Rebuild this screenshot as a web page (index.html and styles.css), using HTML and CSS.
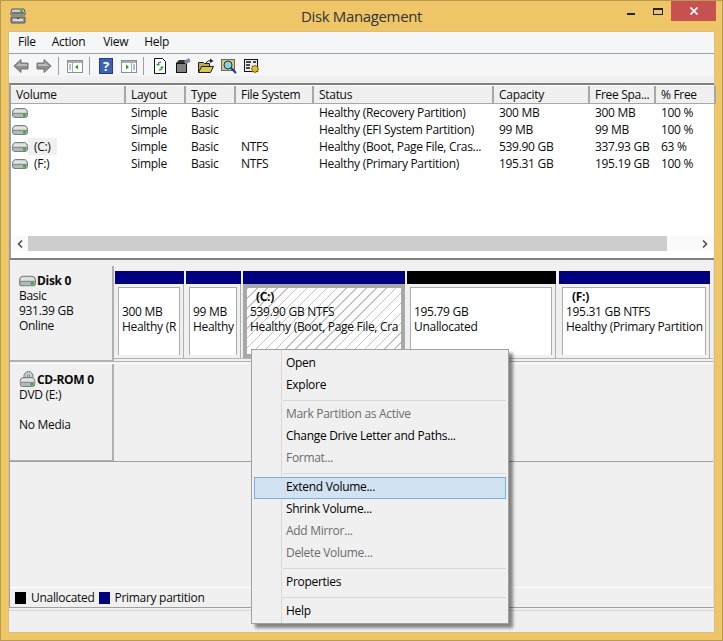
FILE: index.html
```html
<!DOCTYPE html>
<html lang="en">
<head>
<meta charset="utf-8">
<title>Disk Management</title>
<link rel="stylesheet" href="styles.css">
</head>
<body>
<svg class="defs" width="0" height="0" aria-hidden="true">
  <symbol id="drive" viewBox="0 0 16 10">
    <path d="M3.500.5h9c1.500 0 3 2 3 4v2.500a2.500 2.500 0 0 1-2.500 2.500H3A2.500 2.500 0 0 1 .5 7V4.500c0-2 1.500-4 3-4z" fill="#b4b8b8" stroke="#7b7f7f"/>
    <path d="M3.500 1.500h9c1 0 2 1.500 2.300 3H1.200c.3-1.500 1.300-3 2.300-3z" fill="#e2e4e4"/>
    <rect x="1" y="5" width="14" height="1" fill="#8a8e8e"/>
    <rect x="11" y="6" width="3" height="2.500" fill="#35b030"/>
  </symbol>
</svg>
<div class="window">
  <header class="titlebar">
    <svg class="app-icon" viewBox="0 0 16 16" width="16" height="16">
      <path d="M2 1h12l1 3v3H1V4z" fill="#c9cdcf" stroke="#50565a"/>
      <rect x="2" y="4" width="12" height="2" fill="#6f777c"/>
      <rect x="10" y="2" width="3" height="2" fill="#3cc03c"/>
      <path d="M1 9h14v5a1 1 0 0 1-1 1H2a1 1 0 0 1-1-1z" fill="#8f979b" stroke="#50565a"/>
      <rect x="3" y="11" width="10" height="2" fill="#d5d9db"/>
      <rect x="7" y="10" width="2" height="1" fill="#333"/>
    </svg>
    <div class="title">Disk Management</div>
    <div class="controls">
      <span class="btn-min"></span>
      <span class="btn-max"></span>
      <span class="btn-close">
        <svg viewBox="0 0 8 8" width="8" height="8"><path d="M.5.5l7 7M7.500.5l-7 7" stroke="#fff" stroke-width="1.600"/></svg>
      </span>
    </div>
  </header>

  <main class="client">
    <nav class="menubar">
      <span class="m-file">File</span><span class="m-action">Action</span><span class="m-view">View</span><span class="m-help">Help</span>
    </nav>
    <div class="toolbar">
      <svg class="tool" viewBox="0 0 16 16"><path d="M8 1.500L.8 8 8 14.500V11h7V5H8z" fill="#8e8e8e" stroke="#777"/><path d="M7 4.500L3 8h11V6H7z" fill="#bdbdbd"/></svg>
      <svg class="tool" viewBox="0 0 16 16"><path d="M8 1.500L15.200 8 8 14.500V11H1V5h7z" fill="#8e8e8e" stroke="#777"/><path d="M9 4.500L13 8H2V6h7z" fill="#bdbdbd"/></svg>
      <span class="tool-sep"></span>
      <svg class="tool" viewBox="0 0 16 16"><rect x=".5" y="2.500" width="15" height="12" fill="#fff" stroke="#8a8f93"/><rect x="1" y="3" width="14" height="2" fill="#a9adb0"/><path d="M5.500 5v9" stroke="#a7abae"/><path d="M2 7h2M2 9h2M2 11h2" stroke="#5b87b5"/><path d="M11 6.500v5L8 9z" fill="#23a623"/></svg>
      <span class="tool-sep"></span>
      <svg class="tool" viewBox="0 0 16 16"><rect x="1.500" y=".5" width="13" height="15" fill="#3d60b5" stroke="#233d88"/><text x="8" y="13" class="help-q">?</text></svg>
      <svg class="tool" viewBox="0 0 16 16"><rect x=".5" y="2.500" width="15" height="12" fill="#fff" stroke="#8a8f93"/><rect x="1" y="3" width="14" height="2" fill="#a9adb0"/><path d="M10.500 5v9" stroke="#a7abae"/><path d="M12 7h2M12 9h2M12 11h2" stroke="#5b87b5"/><path d="M5 6.500v5L8 9z" fill="#23a623"/></svg>
      <span class="tool-sep"></span>
      <svg class="tool" viewBox="0 0 16 16"><path d="M2.500.5h8l3 3v12h-11z" fill="#fff" stroke="#111"/><path d="M9 3.500a3 3 0 0 0-3.500 2.500H4l2 2 2-2H7a1.500 1.500 0 0 1 2-1z" fill="#1e9b2a"/><path d="M7 12.500a3 3 0 0 0 3.500-2.500H12l-2-2-2 2h1a1.500 1.500 0 0 1-2 1z" fill="#1e9b2a"/></svg>
      <svg class="tool" viewBox="0 0 16 16"><path d="M1 5h11v10H1z" fill="#111"/><path d="M1 5l3-3h7v3z" fill="#333"/><path d="M2 7h9M2 9h9M2 11h9M2 13h9" stroke="#f2f2f2"/><path d="M9 3l5-3 1.500 3.500-5 3z" fill="#76899e"/></svg>
      <svg class="tool" viewBox="0 0 16 16"><path d="M.5 14.500v-10h5l1 1h5v3" fill="#bfae3e" stroke="#222"/><path d="M.5 14.500l3-6h12l-3 6z" fill="#d6c654" stroke="#222"/><path d="M8 5a4 4 0 0 1 5-2" fill="none" stroke="#222"/><path d="M12 .5l3.500 2.500-3.500 2z" fill="#222"/></svg>
      <svg class="tool" viewBox="0 0 16 16"><rect x=".5" y="1.500" width="13" height="11" fill="#d6c482" stroke="#6b6a5a"/><circle cx="7" cy="7" r="4" fill="#7fd3ea" stroke="#333"/><path d="M10 10l5 5" stroke="#1c2fb0" stroke-width="2"/></svg>
      <svg class="tool" viewBox="0 0 16 16"><rect x=".5" y="1.500" width="13" height="12" fill="#eee" stroke="#111"/><path d="M2 4h5M9 4h3M2 7h4M2 10h4" stroke="#111" stroke-width="1.500"/><path d="M11 7l1 1.500 2-.5-.5 2 1.500 1-1.500 1 .5 2-2-.5-1 1.500-1-1.500-2 .5.5-2-1.500-1 1.500-1-.5-2 2 .5z" fill="#e6c21e" stroke="#5d4c08" stroke-width=".7"/></svg>
    </div>

    <section class="volumes">
      <div class="vgrid vhead">
        <span>Volume</span><span>Layout</span><span>Type</span><span>File System</span><span>Status</span><span>Capacity</span><span>Free Spa...</span><span>% Free</span>
      </div>
      <div class="vbody">
        <div class="vgrid vrow">
          <span class="vname"><svg class="drive-sm"><use href="#drive"/></svg></span><span>Simple</span><span>Basic</span><span></span><span>Healthy (Recovery Partition)</span><span>300 MB</span><span>300 MB</span><span>100 %</span>
        </div>
        <div class="vgrid vrow">
          <span class="vname"><svg class="drive-sm"><use href="#drive"/></svg></span><span>Simple</span><span>Basic</span><span></span><span>Healthy (EFI System Partition)</span><span>99 MB</span><span>99 MB</span><span>100 %</span>
        </div>
        <div class="vgrid vrow">
          <span class="vname"><svg class="drive-sm"><use href="#drive"/></svg><em class="sel">(C:)</em></span><span>Simple</span><span>Basic</span><span>NTFS</span><span>Healthy (Boot, Page File, Cras...</span><span>539.90 GB</span><span>337.93 GB</span><span>63 %</span>
        </div>
        <div class="vgrid vrow">
          <span class="vname"><svg class="drive-sm"><use href="#drive"/></svg><em>(F:)</em></span><span>Simple</span><span>Basic</span><span>NTFS</span><span>Healthy (Primary Partition)</span><span>195.31 GB</span><span>195.19 GB</span><span>100 %</span>
        </div>
      </div>
      <div class="hscroll">
        <span class="arrow">
          <svg viewBox="0 0 6 8" width="6" height="8"><path d="M5 .5L1.500 4 5 7.500" fill="none" stroke="#505050" stroke-width="1.600"/></svg>
        </span>
        <span class="thumb"></span>
        <span class="arrow arrow-r">
          <svg viewBox="0 0 6 8" width="6" height="8"><path d="M1 .5L4.500 4 1 7.500" fill="none" stroke="#505050" stroke-width="1.600"/></svg>
        </span>
      </div>
    </section>

    <section class="disks">
      <div class="disk disk-0">
        <div class="dlabel">
          <div class="dname"><svg class="drive-lg"><use href="#drive"/></svg>Disk 0</div>
          <div>Basic</div>
          <div>931.39 GB</div>
          <div>Online</div>
        </div>
        <div class="parts">
          <div class="part p1">
            <div class="bar"></div>
            <div class="pbody"><div class="pin"><p class="blank">&nbsp;</p><p>300 MB</p><p>Healthy (R</p></div></div>
          </div>
          <div class="part p2">
            <div class="bar"></div>
            <div class="pbody"><div class="pin"><p class="blank">&nbsp;</p><p>99 MB</p><p>Healthy</p></div></div>
          </div>
          <div class="part p3">
            <div class="bar"></div>
            <div class="pbody pbody-sel"><div class="pin hatch"><p class="pdrive">(C:)</p><p>539.90 GB NTFS</p><p>Healthy (Boot, Page File, Cra</p></div></div>
          </div>
          <div class="part p4">
            <div class="bar black"></div>
            <div class="pbody"><div class="pin"><p class="blank">&nbsp;</p><p>195.79 GB</p><p>Unallocated</p></div></div>
          </div>
          <div class="part p5">
            <div class="bar"></div>
            <div class="pbody"><div class="pin"><p class="pdrive">(F:)</p><p>195.31 GB NTFS</p><p>Healthy (Primary Partition</p></div></div>
          </div>
        </div>
      </div>
      <div class="disk disk-1">
        <div class="dlabel">
          <div class="dname">
            <svg class="drive-lg" viewBox="0 0 16 16"><circle cx="9" cy="5" r="4.500" fill="#c9ced2" stroke="#6b7a85"/><circle cx="9" cy="5" r="1.200" fill="#fff" stroke="#6b7a85"/><use href="#drive" x="0" y="6" width="16" height="10"/></svg>CD-ROM 0
          </div>
          <div>DVD (E:)</div>
          <div class="blank">&nbsp;</div>
          <div>No Media</div>
        </div>
        <div class="empty"></div>
      </div>
      <div class="spacer"></div>
      <div class="legend">
        <i class="sw sw-black"></i><span>Unallocated</span>
        <i class="sw sw-navy"></i><span>Primary partition</span>
      </div>
    </section>
    <footer class="status"></footer>
  </main>

  <ul class="menu">
    <li>Open</li>
    <li>Explore</li>
    <li class="sep"></li>
    <li class="off">Mark Partition as Active</li>
    <li>Change Drive Letter and Paths...</li>
    <li class="off">Format...</li>
    <li class="sep"></li>
    <li class="hot">Extend Volume...</li>
    <li>Shrink Volume...</li>
    <li class="off">Add Mirror...</li>
    <li class="off">Delete Volume...</li>
    <li class="sep"></li>
    <li>Properties</li>
    <li class="sep"></li>
    <li>Help</li>
  </ul>
</div>
</body>
</html>
```
FILE: styles.css
```css
* { box-sizing: border-box; }
html, body { margin: 0; padding: 0; }
body {
  width: 723px;
  height: 641px;
  overflow: hidden;
  font-family: "Open Sans", "Noto Sans", sans-serif;
  font-size: 12px;
  letter-spacing: -0.3px;
  color: #0c0c0c;
}
.defs { position: absolute; }
p { margin: 0; }

.window {
  position: relative;
  width: 723px;
  height: 641px;
  display: flex;
  flex-direction: column;
  background: #eec668;
  border: 1px solid #b89a50;
  padding: 0 7px 7px;
}

/* title bar */
.titlebar {
  height: 30px;
  flex: none;
  display: flex;
  align-items: flex-start;
  position: relative;
}
.app-icon { margin: 7px 0 0 2px; }
.title {
  position: absolute;
  left: 0;
  right: 0;
  top: 4px;
  text-align: center;
  font-size: 15px;
  line-height: 22px;
  letter-spacing: -0.35px;
  color: #333;
}
.controls {
  position: absolute;
  top: 0;
  right: -7px;
  height: 20px;
  display: flex;
  align-items: flex-start;
  padding-right: 6px;
}
.btn-min { width: 8px; height: 2px; margin: 12px 18px 0 0; background: #222; }
.btn-max { width: 10px; height: 7px; margin: 7px 8px 0 0; border: 1px solid #222; border-top-width: 2px; }
.btn-close {
  width: 45px;
  height: 20px;
  background: #c75050;
  display: flex;
  align-items: center;
  justify-content: center;
}

/* client */
.client {
  flex: 1;
  min-height: 0;
  display: flex;
  flex-direction: column;
  background: #f0f0f0;
  border: 1px solid #d9c080;
}
.menubar {
  height: 22px;
  flex: none;
  background: #f5f6f7;
  border-bottom: 1px solid #a0a0a0;
  display: flex;
  align-items: center;
  line-height: 20px;
  padding-bottom: 1px;
}
.m-file { margin-left: 9px; }
.m-action { margin-left: 16px; }
.m-view { margin-left: 18px; }
.m-help { margin-left: 16px; }

.toolbar {
  height: 22px;
  flex: none;
  background: #f5f6f7;
  display: flex;
  align-items: center;
  gap: 7px;
  padding: 1px 0 0 4px;
}
.tool { width: 16px; height: 16px; flex: none; }
.tool-sep { width: 1px; height: 18px; background: #a0a0a0; margin: 0 1px 0 -1px; }
.help-q { font-size: 13px; font-weight: 700; fill: #fff; text-anchor: middle; }

/* volume list */
.volumes {
  margin-top: 7px;
  flex: none;
  height: 177px;
  display: flex;
  flex-direction: column;
  background: #fff;
  border-top: 2px solid #808080;
  border-left: 2px solid #a0a0a0;
  border-bottom: 2px solid #808080;
}
.vgrid {
  display: grid;
  grid-template-columns: 115px 60px 50px 78px 180px 96px 66px 60px;
}
.vgrid span { padding-left: 5px; white-space: nowrap; overflow: hidden; }
.vhead {
  flex: none;
  height: 19px;
  line-height: 18px;
  background: #f0f0f0;
  border-top: 1px solid #fff;
}
.vhead span { border-right: 2px solid #a8a8a8; border-bottom: 1px solid #a8a8a8; }
.vbody {
  flex: 1;
  min-height: 0;
}
.vrow { height: 17px; line-height: 17px; }
.vgrid .vname {
  padding-left: 1px;
  display: flex;
  align-items: center;
}
.vname em { font-style: normal; padding: 0 6px; }
.vname em.sel { background: #f0f0f0; }
.drive-sm { width: 16px; height: 10px; flex: none; }
.hscroll {
  height: 15px;
  margin-bottom: 7px;
  flex: none;
  display: flex;
  background: #fafafa;
}
.arrow {
  width: 17px;
  flex: none;
  display: flex;
  align-items: center;
  justify-content: center;
}
.arrow-r { margin-left: auto; width: 18px; }
.thumb { width: 639px; background: #cdcdcd; }

/* disk view */
.disks {
  flex: 1;
  min-height: 0;
  display: flex;
  flex-direction: column;
  padding-top: 6px;
  border-bottom: 1px solid #a0a0a0;
  border-left: 1px solid #a0a0a0;
  border-right: 1px solid #e0e0e0;
}
.disk { display: flex; flex: none; }
.disk-0 { height: 96px; border-bottom: 1px solid #b4b4b4; }
.disk-1 { height: 99px; border-top: 1px solid #fff; margin-top: 1px; border-bottom: 1px solid #a0a0a0; }
.dlabel {
  width: 104px;
  flex: none;
  padding: 7px 0 0 9px;
  line-height: 15px;
  border-right: 2px solid #b0b0b0;
  border-bottom: 1px solid #b0b0b0;
}
.dname { display: flex; align-items: center; font-weight: 700; height: 15px; line-height: 15px; }
.disk-1 .dname { height: 16px; }
.drive-lg { width: 17px; height: 16px; flex: none; margin-right: 1px; }
.parts {
  flex: 1;
  display: flex;
  gap: 2px;
  padding: 5px 3px 0 1px;
  min-width: 0;
  background: linear-gradient(#b4b4b4, #b4b4b4) no-repeat 0 92px / 100% 1px;
}
.part { display: flex; flex-direction: column; flex: none; }
.p1 { width: 69px; }
.p2 { width: 55px; }
.p3 { width: 162px; }
.p4 { width: 149px; margin-right: 1px; }
.p5 { width: 151px; }
.bar { height: 13px; background: #000080; flex: none; }
.bar.black { background: #000; }
.pbody {
  height: 74px;
  padding: 3px;
  background: #f0f0f0;
  border-right: 1px solid #b0b0b0;
}
.pbody-sel { background: #a8a8a8; padding: 4px; border: none; }
.pin {
  height: 100%;
  background: #fff;
  border: 1px solid #ababab;
  border-bottom: none;
  padding: 1px 0 0 3px;
  line-height: 15px;
  overflow: hidden;
  white-space: nowrap;
}
.pin.hatch {
  border: none;
  padding-top: 1px;
  background: repeating-linear-gradient(135deg, #c4c4c4 0 1px, #fff 1px 7px);
}
.pdrive { font-weight: 700; padding-left: 6px; }
.empty { flex: 1; }
.spacer { flex: 1; min-height: 0; }
.legend {
  height: 20px;
  flex: none;
  border-top: 1px solid #fff;
  display: flex;
  align-items: center;
  padding-left: 5px;
}
.legend span { margin-left: 5px; margin-right: 4px; }
.sw { width: 11px; height: 12px; display: block; flex: none; }
.sw-black { background: #000; }
.sw-navy { background: #000080; }
.status { height: 22px; flex: none; border-top: 1px solid #d8d8d8; margin-top: 2px; }

/* context menu */
.menu {
  position: absolute;
  left: 250px;
  top: 348px;
  width: 258px;
  height: 275px;
  margin: 0;
  padding: 3px 2px 2px;
  list-style: none;
  background: #f0f0f0;
  border: 1px solid #a0a0a0;
  box-shadow: 4px 4px 3px rgba(0, 0, 0, 0.45);
  background-image: linear-gradient(#d8d8d8, #d8d8d8);
  background-size: 1px 100%;
  background-position: 29px 0;
  background-repeat: no-repeat;
  color: #000;
}
.menu li {
  height: 22px;
  line-height: 18px;
  padding-left: 31px;
  border: 1px solid transparent;
}
.menu li.off { color: #6d6d6d; }
.menu li.hot { background: #d1e2f2; border-color: #78aee5; }
.menu li.sep {
  height: 7px;
  border: none;
  padding: 0;
  margin-left: 29px;
  background: linear-gradient(#d8d8d8, #d8d8d8) no-repeat 0 3px / 100% 1px;
}
```
